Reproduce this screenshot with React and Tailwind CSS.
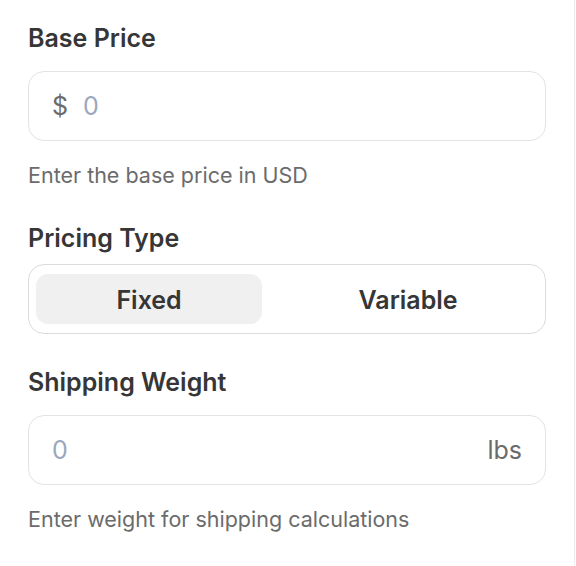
export default function App() {
  return (
    <div className="min-h-[566px] w-[576px] bg-white" style={{ fontFamily: "Inter, 'Noto Sans', sans-serif" }}>
      <div className="w-[575px] min-h-[566px] border-r border-[#ececec] pl-7 pr-[28px] pt-[22px]">
        <div className="flex flex-col">
          <label className="text-[25px] font-semibold leading-[32px] text-[#363636]">Base Price</label>
          <div className="mt-[17px] flex h-[70px] items-center rounded-[16px] border border-[#e3e3e3] px-[23px] pt-[2px]">
            <span className="text-[25px] text-[#6b6b6b]">$</span>
            <span className="ml-[15px] text-[25px] text-[#9aa8bc]">0</span>
          </div>
          <p className="mt-[20px] text-[21.5px] leading-[28px] text-[#6b6b6b]">Enter the base price in USD</p>
        </div>

        <div className="mt-[33px] flex flex-col">
          <label className="text-[25px] font-semibold leading-[32px] text-[#363636]">Pricing Type</label>
          <div className="mt-[10px] flex h-[70px] gap-4 rounded-[16px] border border-[#dcdcdc] p-[9px] px-[7px]">
            <button className="flex flex-auto items-center justify-center rounded-[12px] bg-[#f0f0f0] px-4 pt-[3px] text-[25px] font-semibold text-[#363636]">Fixed</button>
            <button className="flex flex-auto items-center justify-center rounded-[12px] px-4 pt-[3px] text-[25px] font-semibold text-[#363636]">Variable</button>
          </div>
        </div>

        <div className="mt-[32px] flex flex-col">
          <label className="text-[25px] font-semibold leading-[32px] text-[#363636]">Shipping Weight</label>
          <div className="mt-[17px] flex h-[70px] items-center justify-between rounded-[16px] border border-[#e3e3e3] px-[23px] pt-[2px]">
            <span className="text-[25px] text-[#9aa8bc]">0</span>
            <span className="text-[25px] text-[#6b6b6b]">lbs</span>
          </div>
          <p className="mt-[20px] text-[21.5px] leading-[28px] text-[#6b6b6b]">Enter weight for shipping calculations</p>
        </div>
      </div>
    </div>
  );
}
